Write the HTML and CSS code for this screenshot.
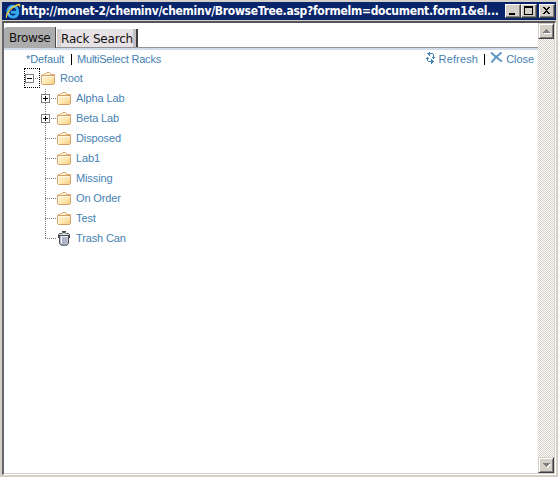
FILE: index.html
```html
<!DOCTYPE html>
<html lang="en">
<head>
<meta charset="utf-8">
<title>Browse Tree</title>
<link rel="stylesheet" href="styles.css">
</head>
<body>
<svg class="defs" width="0" height="0">
  <defs>
    <linearGradient id="paper" x2="1" y2="1"><stop stop-color="#fff3d2"/><stop offset=".55" stop-color="#ffe7b0"/><stop offset="1" stop-color="#f1ca7c"/></linearGradient>
    <symbol id="folder" viewBox="0 0 15 13">
      <path d="M1.5 2.5H2.5L3.5 1.5H4.5L5.5 .5H8.5L9.5 1.5V2.5H13.5V11.5H1.5Z" fill="#fff0cc" stroke="#d9a875"/>
      <path d="M.5 3.5H13.5V11.5L12.5 12.5H1.5L.5 11.5Z" fill="url(#paper)" stroke="#d5a16b"/>
      <path d="M1.5 11V4.5H13" fill="none" stroke="#fff8e2"/>
    </symbol>
    <symbol id="arrow" viewBox="0 0 7 4"><path d="M3 0H4V1H5V2H6V3H7V4H0V3H1V2H2V1H3Z"/></symbol>
  </defs>
</svg>
<div class="window">
  <header class="titlebar">
    <svg class="ie" width="16" height="16" viewBox="0 0 16 16">
      <path d="M12.8 10.4C11.8 12.9 9.9 14 7.9 14C4.9 14 2.8 11.7 2.8 8.7C2.8 5.5 5 3.3 8 3.3C11.2 3.3 13 5.7 12.8 9.3H5.8" fill="none" stroke="#35a7ec" stroke-width="2.9"/>
      <path d="M4 6C5 4 7 3 9 3.4M3.2 8.5C3.1 10 3.8 11.7 5 12.7" fill="none" stroke="#8ee1ff"/>
      <path d="M2 15.2C-.7 14.5 1.2 9.7 5.3 5.8C9 2.1 13.8-.4 15 1.2C15.7 2.2 15.2 3.6 14.6 4.5C14.7 2.7 13.7 2 11 3.3C6.5 5.4 1.4 11.5 2 15.2Z" fill="#f5c73b"/>
    </svg>
    <h1 class="title">http://monet-2/cheminv/cheminv/BrowseTree.asp?formelm=document.form1&amp;el...</h1>
    <div class="controls">
      <button class="ctl" aria-label="Minimize"><svg width="14" height="12"><path d="M3 8H9V10H3Z"/></svg></button>
      <button class="ctl" aria-label="Maximize"><svg width="14" height="12"><path d="M2 1H11V10H2ZM3 3V9H10V3Z" fill-rule="evenodd"/></svg></button>
      <button class="ctl last" aria-label="Close window"><svg width="14" height="12"><path d="M3 2H5V3H6V4H7V3H8V2H10V3H9V4H8V5H7V6H8V7H9V8H10V9H8V8H7V7H6V8H5V9H3V8H4V7H5V6H6V5H5V4H4V3H3Z"/></svg></button>
    </div>
  </header>
  <div class="frame">
    <main class="page">
      <nav class="tabs">
        <a class="tab active"><span class="tab-text">Browse</span></a>
        <a class="tab"><span class="tab-text search">Rack Search</span></a>
      </nav>
      <div class="toolbar">
        <a class="link default">*Default</a><i class="bar"></i><a class="link multi">MultiSelect Racks</a>
        <div class="actions">
          <svg class="refresh-icon" width="9" height="12" viewBox="0 0 9 12"><path d="M3 0H4V1H7V2H8V5H7V2H4V4H3V3H2V2H1V1H3ZM6 5H9V6H8V7H7V6H6ZM1 5H2V6H3V7H2V9H5V7H6V8H7V9H8V10H7V11H6V12H5V10H2V9H1V7H0V6H1Z" fill="#3f83b8"/></svg>
          <a class="link refresh">Refresh</a><i class="bar"></i>
          <svg class="close-icon" width="13" height="11" viewBox="0 0 13 11"><path d="M1 .5C4 3 8 7 12 9.5M11.5 .5C8 3 4 7 1.5 10.5" fill="none" stroke="#5794c4" stroke-width="1.9"/></svg>
          <a class="link close">Close</a>
        </div>
      </div>
      <div class="tree">
        <div class="row root"><span class="focus"><span class="toggle"></span><i class="stub"></i></span><svg class="folder"><use href="#folder"/></svg><a class="link">Root</a></div>
        <div class="children">
          <div class="row"><span class="branch"><span class="toggle plus"></span></span><svg class="folder"><use href="#folder"/></svg><a class="link">Alpha Lab</a></div>
          <div class="row"><span class="branch"><span class="toggle plus"></span></span><svg class="folder"><use href="#folder"/></svg><a class="link">Beta Lab</a></div>
          <div class="row"><span class="branch"></span><svg class="folder"><use href="#folder"/></svg><a class="link">Disposed</a></div>
          <div class="row"><span class="branch"></span><svg class="folder"><use href="#folder"/></svg><a class="link">Lab1</a></div>
          <div class="row"><span class="branch"></span><svg class="folder"><use href="#folder"/></svg><a class="link">Missing</a></div>
          <div class="row"><span class="branch"></span><svg class="folder"><use href="#folder"/></svg><a class="link">On Order</a></div>
          <div class="row"><span class="branch"></span><svg class="folder"><use href="#folder"/></svg><a class="link">Test</a></div>
          <div class="row"><span class="branch"></span><svg class="trash" width="15" height="16" viewBox="0 0 15 16">
            <path d="M2.5 5H11.5V13.5L10 15.2H4L2.5 13.5Z" fill="#b9bdcd" stroke="#4b4d56"/>
            <path d="M4.5 6V13" stroke="#f4f4fa"/><path d="M6.5 7V14M8.5 7V14" stroke="#a5abc4"/>
            <path d="M1.5 4.5L2.5 3.5H4.5L6 2.5H8L9.5 3.5H11.5L12.5 4.5V5.5H1.5Z" fill="#d8dae2" stroke="#4b4d56"/>
            <path d="M5 1H9V2H5ZM1 5H2V8H1ZM12 5H13V8H12Z" fill="#414249"/><path d="M4 6.5H11" stroke="#eef0f5"/>
          </svg><a class="link">Trash Can</a></div>
        </div>
      </div>
    </main>
    <aside class="scrollbar">
      <span class="sbtn"><svg class="arrow"><use href="#arrow"/></svg></span>
      <span class="sbtn"><svg class="arrow down"><use href="#arrow"/></svg></span>
    </aside>
  </div>
</div>
</body>
</html>
```
FILE: styles.css
```css
* { box-sizing: border-box; }
body { margin: 0; overflow: hidden; background: #d4d0c8; }
.defs { position: absolute; }
svg { display: block; flex: none; }
.window { width: 558px; height: 477px; padding: 2px 2px 2px; display: flex; flex-direction: column; }
.titlebar { height: 18px; flex: none; background: #08246b; display: flex; align-items: center; }
.ie { margin-left: 3px; margin-right: 0; }
.title { margin: 0; width: 482px; color: #fff; font: bold 12px/18px "DejaVu Sans Condensed", "DejaVu Sans", sans-serif; font-stretch: condensed; white-space: nowrap; letter-spacing: -.29px; }
.controls { display: flex; margin-left: 2px; }
.ctl { width: 16px; height: 14px; padding: 0; border: 1px solid; border-color: #fff #404040 #404040 #fff; box-shadow: inset -1px -1px #808080; background: #d4d0c8; overflow: hidden; }
.ctl.last { margin-left: 2px; }
.frame { flex: 1; display: flex; margin-top: 1px; border: 2px solid; border-color: #55555a #fff #fff #55555a; border-left-color: #66666a; border-right-width: 1px; border-bottom-width: 1px; box-shadow: inset -1px -1px #d4d0c8; padding: 0 1px 1px 0; background: #fff; }
.page { flex: 1; min-width: 0; }
.tabs { height: 27px; padding-top: 4px; border-bottom: 2px solid #d0dce9; box-shadow: inset 0 -1px #949494; display: flex; align-items: flex-end; }
.tab { display: block; font: 12px/18px "DejaVu Sans", sans-serif; color: #111; height: 18px; width: 81px; margin: 0 0 1px 1px; background: #e7e2e5; border-left: 4px solid #d3cfd2; border-right: 2px solid #3f3f3f; box-shadow: inset -3px 0 #c5c0c3; }
.tab.active { width: 52px; height: 21px; margin: 0; background: #acacac; border-left: 0; border-right: 1px solid #4a4a4a; box-shadow: none; line-height: 22px; padding-left: 5px; border-top-left-radius: 3px; }
.tab-text { display: block; white-space: nowrap; letter-spacing: -.4px; }
.tab-text.search { letter-spacing: -.18px; line-height: 20px; }
.toolbar { display: flex; height: 18px; padding-left: 22px; align-items: center; }
.link { font: 11px/18px "Liberation Sans", Arial, sans-serif; color: #4682b4; white-space: nowrap; letter-spacing: -.12px; }
.link.default { width: 39px; }
.link.multi { letter-spacing: -.2px; }
.bar { width: 1px; height: 11px; background: #000; margin: 0 5px 0 6px; }
.actions { margin-left: auto; display: flex; align-items: center; padding-right: 4px; }
.refresh-icon { margin-right: 4px; margin-bottom: 3px; }
.link.refresh { letter-spacing: .15px; }
.close-icon { margin-right: 3px; margin-bottom: 3px; }
.link.close { letter-spacing: -.05px; }
.tree { padding-left: 20px; }
.row { height: 20px; display: flex; align-items: center; }
.focus { width: 16px; height: 20px; border: 1px dotted #000; display: flex; align-items: center; }
.toggle { flex: none; width: 9px; height: 9px; border: 1px solid #808080; background: linear-gradient(#000, #000) center / 5px 1px no-repeat #fff; }
.toggle.plus { background: linear-gradient(#000, #000) center / 5px 1px no-repeat, linear-gradient(#000, #000) center / 1px 5px no-repeat #fff; }
.stub { width: 5px; height: 1px; background: repeating-linear-gradient(90deg, transparent 0 1px, #808080 1px 2px); }
.folder { width: 15px; height: 13px; margin-right: 4px; }
.root .folder { margin-left: 1px; margin-right: 4px; }
.children { margin-left: 17px; background: repeating-linear-gradient(#808080 0 1px, transparent 1px 2px) 4px 1px / 1px 150px no-repeat; }
.branch { width: 16px; height: 20px; display: flex; align-items: center; background: repeating-linear-gradient(90deg, #808080 0 1px, transparent 1px 2px) 4px 10px / 12px 1px no-repeat; }
.trash { margin-right: 4px; }
.scrollbar { width: 16px; display: flex; flex-direction: column; justify-content: space-between; background: repeating-conic-gradient(#d4d0c8 0 25%, #fff 0 50%) 0 0 / 2px 2px; }
.sbtn { width: 16px; height: 16px; display: flex; align-items: center; justify-content: center; background: #d4d0c8; border: 1px solid; border-color: #d4d0c8 #404040 #404040 #d4d0c8; box-shadow: inset 1px 1px #fff, inset -1px -1px #808080; }
.arrow { width: 7px; height: 4px; fill: #808080; filter: drop-shadow(1px 1px #fff); }
.arrow.down { transform: rotate(180deg); filter: drop-shadow(-1px -1px #fff); }
```
